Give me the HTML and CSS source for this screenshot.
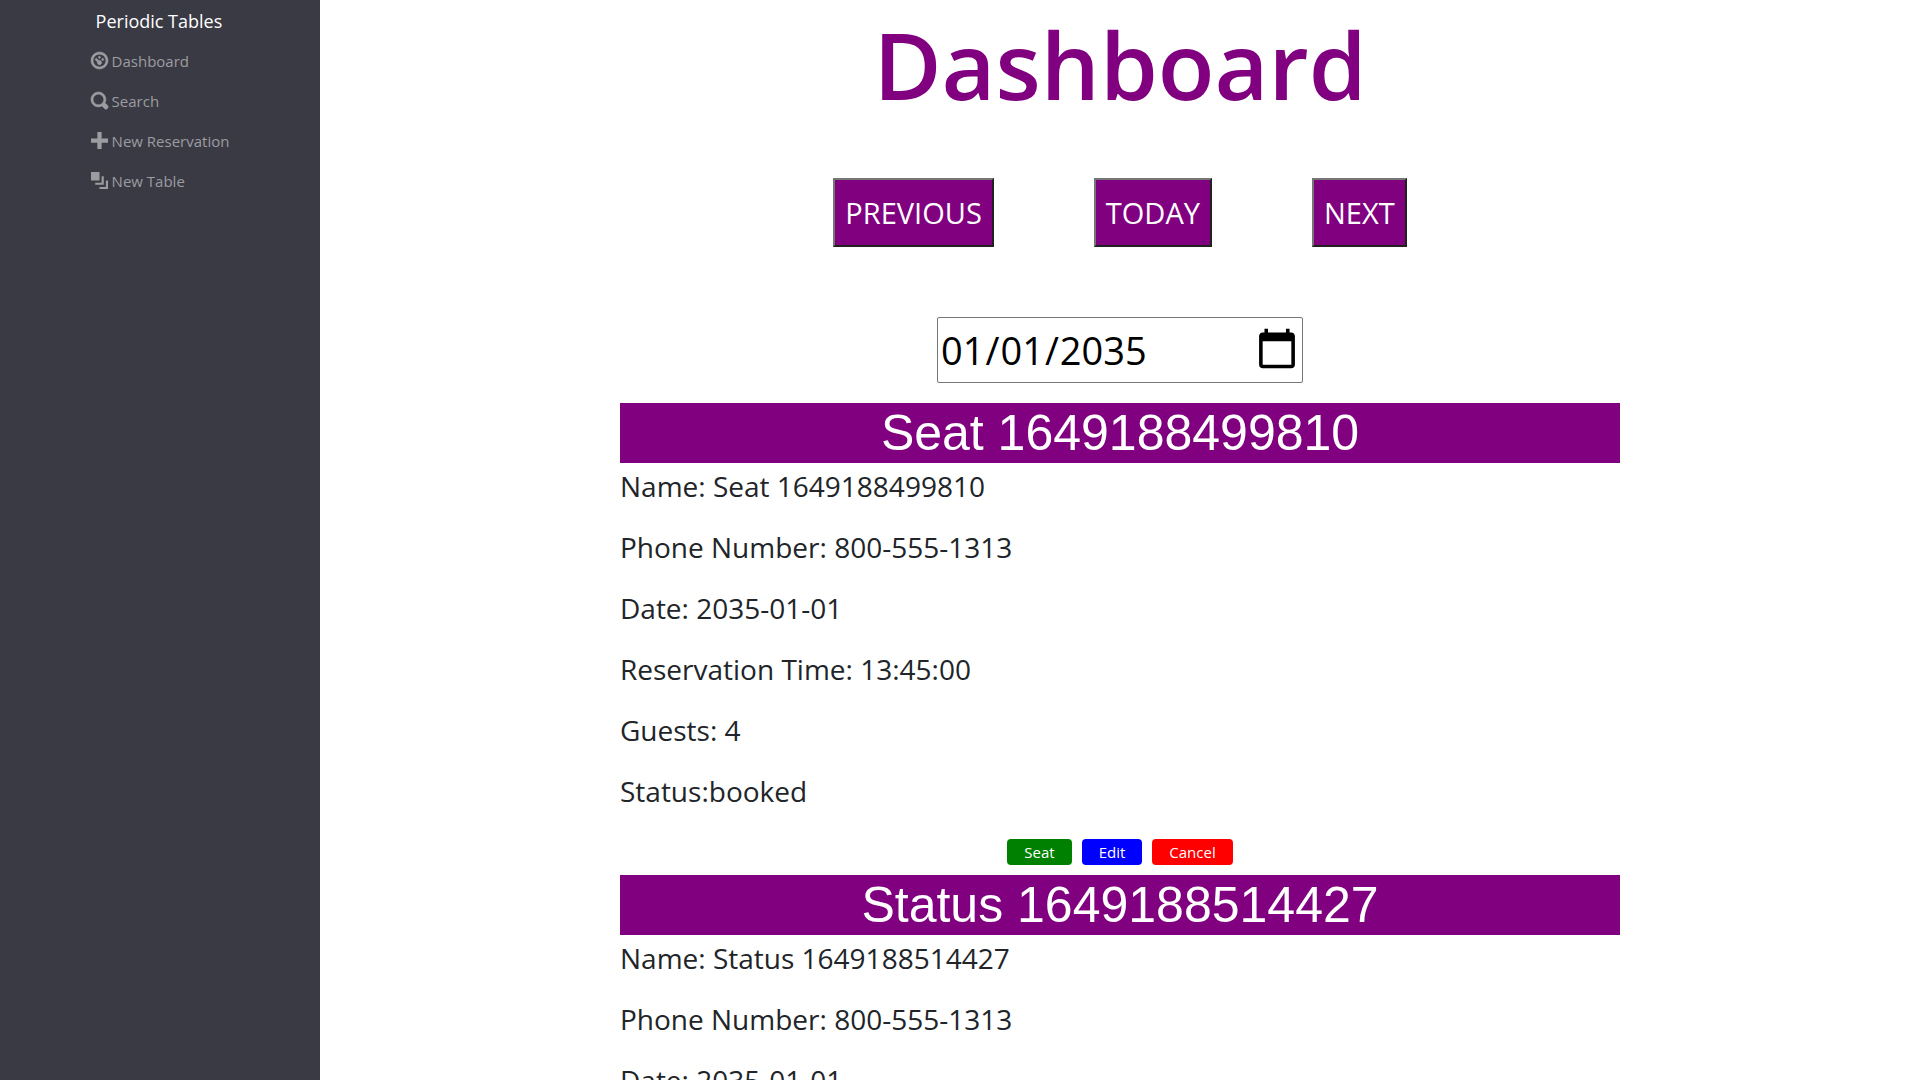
FILE: index.html
```html
<!DOCTYPE html>
<html lang="en">
<head>
<meta charset="utf-8">
<meta name="viewport" content="width=device-width, initial-scale=1">
<title>Periodic Tables</title>
<link rel="stylesheet" href="styles.css">
</head>
<body>
<div class="layout">
  <nav class="sidebar">
    <div class="menu">
      <a class="brand" href="#">Periodic Tables</a>
      <a class="menu-link" href="#"><svg class="icon icon-bold" viewBox="0 0 8 8" aria-hidden="true"><path d="M4 0c-2.2 0-4 1.8-4 4s1.8 4 4 4 4-1.8 4-4-1.8-4-4-4zm0 1c1.66 0 3 1.34 3 3s-1.34 3-3 3-3-1.34-3-3 1.34-3 3-3zm0 1c-.28 0-.5.22-.5.5s.22.5.5.5.5-.22.5-.5-.22-.5-.5-.5zm-1.66 1a.5.5 0 0 0-.19.84l.91.91c-.02.08-.06.16-.06.25 0 .55.45 1 1 1s1-.45 1-1-.45-1-1-1c-.09 0-.17.04-.25.06l-.91-.91a.5.5 0 0 0-.44-.16.5.5 0 0 0-.06 0zm3.16 0c-.28 0-.5.22-.5.5s.22.5.5.5.5-.22.5-.5-.22-.5-.5-.5z"/></svg>Dashboard</a>
      <a class="menu-link" href="#"><svg class="icon icon-bold" viewBox="0 0 8 8" aria-hidden="true"><path d="M3.5 0c-1.93 0-3.5 1.57-3.5 3.5s1.57 3.5 3.5 3.5c.59 0 1.17-.14 1.66-.41a1 1 0 0 0 .13.13l1 1a1.02 1.02 0 1 0 1.44-1.44l-1-1a1 1 0 0 0-.16-.13c.27-.49.44-1.06.44-1.66 0-1.93-1.55-3.5-3.5-3.5zm0 1c1.39 0 2.5 1.1 2.5 2.5 0 .66-.24 1.27-.66 1.72-.01.01-.02.02-.03.03a1 1 0 0 0-.13.13c-.44.4-1.04.63-1.69.63-1.4 0-2.5-1.11-2.5-2.5s1.1-2.5 2.5-2.5z"/></svg>Search</a>
      <a class="menu-link" href="#"><svg class="icon" viewBox="0 0 8 8" aria-hidden="true"><path d="M3 0v3h-3v2h3v3h2v-3h3v-2h-3v-3h-2z"/></svg>New Reservation</a>
      <a class="menu-link" href="#"><svg class="icon" viewBox="0 0 8 8" aria-hidden="true"><path d="M0 0v4h4v-4h-4zm5 2v3h-3v1h4v-4h-1zm2 2v3h-3v1h4v-4h-1z"/></svg>New Table</a>
    </div>
  </nav>
  <main class="content">
    <h1 class="title">Dashboard</h1>
    <div class="day-nav">
      <button class="day-button" type="button">PREVIOUS</button>
      <button class="day-button" type="button">TODAY</button>
      <button class="day-button" type="button">NEXT</button>
    </div>
    <input class="date" type="date" value="2035-01-01" aria-label="Reservation date">
    <section class="reservation">
      <h2 class="reservation-title">Seat 1649188499810</h2>
      <p class="detail">Name: Seat 1649188499810</p>
      <p class="detail">Phone Number: 800-555-1313</p>
      <p class="detail">Date: 2035-01-01</p>
      <p class="detail">Reservation Time: 13:45:00</p>
      <p class="detail">Guests: 4</p>
      <p class="detail">Status:booked</p>
      <div class="actions">
        <button class="action seat" type="button">Seat</button>
        <button class="action edit" type="button">Edit</button>
        <button class="action cancel" type="button">Cancel</button>
      </div>
    </section>
    <section class="reservation">
      <h2 class="reservation-title">Status 1649188514427</h2>
      <p class="detail">Name: Status 1649188514427</p>
      <p class="detail">Phone Number: 800-555-1313</p>
      <p class="detail">Date: 2035-01-01</p>
    </section>
  </main>
</div>
</body>
</html>
```

FILE: styles.css
```css
* { box-sizing: border-box; }

body {
  margin: 0;
  font-family: "Segoe UI", "Open Sans", "Noto Sans", sans-serif;
  font-size: 15px;
  line-height: 24px;
  color: #212529;
  background: #fff;
}

.layout {
  display: grid;
  grid-template-columns: 1fr 5fr;
  height: 100vh;
}

.sidebar {
  display: flex;
  justify-content: center;
  background: #3a3a44;
}

.menu {
  display: flex;
  flex-direction: column;
}

.brand {
  padding: 9px 5px 8px;
  font-size: 18px;
  color: #fff;
  text-decoration: none;
}

.menu-link {
  display: flex;
  align-items: center;
  gap: 4px;
  padding: 8px 0;
  color: #9c9ca1;
  text-decoration: none;
}

.icon {
  width: 17px;
  height: 17px;
  margin-bottom: 2px;
  fill: currentColor;
  overflow: visible;
}

.icon-bold {
  stroke: currentColor;
  stroke-width: .25;
}

.content {
  display: flex;
  flex-direction: column;
  align-items: center;
  overflow-y: auto;
  scrollbar-width: none;
}

.title {
  margin: 0;
  font-size: 93px;
  line-height: 128px;
  font-weight: 600;
  color: purple;
}

.day-nav {
  display: flex;
  gap: 100px;
  margin: 50px 0 70px;
}

.day-button {
  padding: 10px;
  border: 2px outset #767676;
  font: inherit;
  font-size: 29px;
  line-height: 45px;
  color: #fff;
  background: purple;
}

.date {
  flex: none;
  width: 366px;
  height: 66px;
  margin-bottom: 20px;
  padding: 1px 2px;
  border: 1px solid #767676;
  border-radius: 2px;
  font: inherit;
  font-size: 38px;
  line-height: 56px;
  color: #000;
}

.date::-webkit-calendar-picker-indicator {
  width: 46px;
  height: 46px;
  padding: 0;
}

.reservation {
  width: 1000px;
  max-width: 100%;
}

.reservation-title {
  margin: 0;
  font-family: Arial, "Liberation Sans", sans-serif;
  font-size: 50px;
  line-height: 60px;
  font-weight: 400;
  text-align: center;
  color: #fff;
  background: purple;
}

.detail {
  margin: 0 0 14px;
  font-size: 28px;
  line-height: 47px;
}

.actions {
  display: flex;
  justify-content: center;
  gap: 10px;
  padding: 10px 0;
}

.action {
  padding: 1px 17px;
  border: 0;
  border-radius: 4px;
  font: inherit;
  line-height: 24px;
  color: #fff;
}

.seat { background: green; }
.edit { background: blue; }
.cancel { background: red; }
```
